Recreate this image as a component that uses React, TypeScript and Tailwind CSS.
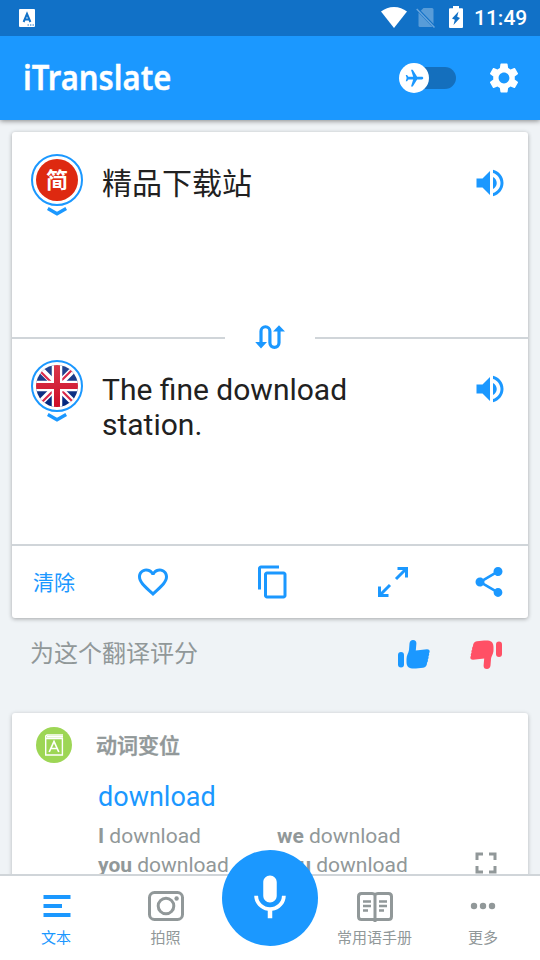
import type { ReactNode } from 'react';
import {
  MdContentCopy,
  MdFavoriteBorder,
  MdFlight,
  MdFullscreen,
  MdMic,
  MdSettings,
  MdShare,
} from 'react-icons/md';

function StatusBar() {
  return (
    <div className="flex h-9 items-center bg-[#1171c7] pr-3 pl-[19px] text-white">
      <svg className="h-[18px] w-4" viewBox="0 0 16 18">
        <rect width="16" height="18" rx="1" fill="#fff" />
        <path d="M4.600 13L8 4.800L11.400 13M5.600 10.400H10.400" fill="none" stroke="#1171c7" strokeWidth="2" />
        <path d="M8.500 16h1.400M11 16h1.400M13.500 16h1.400" stroke="#1171c7" strokeWidth="1.200" />
      </svg>
      <svg className="mt-[-2px] ml-auto h-[21px] w-[26px]" viewBox="0 0 26 21">
        <path d="M0 4.600C3.600 1.700 8 0 13 0s9.400 1.700 13 4.600L13 21z" fill="#fff" />
      </svg>
      <svg className="ml-[9px] h-[22px] w-5" viewBox="0 0 20 22">
        <path d="M7.500 1H16q1.500 0 1.500 1.500V20H4q-1.500 0-1.500-1.500V6z" fill="#fff" opacity=".3" />
        <path d="M.7 1.500L19 20.500" stroke="#1171c7" strokeWidth="3" />
        <path d="M.7 2L18.500 20.500" stroke="#68a5dd" strokeWidth="1.500" />
      </svg>
      <svg className="mt-[-2px] ml-[13px] h-[22px] w-[14px]" viewBox="0 0 14 22">
        <path d="M4 0h6v2.200h3q1 0 1 1V21q0 1-1 1H1q-1 0-1-1V3.200q0-1 1-1h3z" fill="#fff" />
        <path d="M9.500 5.500L3 12.500l2.800 1.200L4.500 19L11 12l-2.800-1.200z" fill="#1171c7" />
      </svg>
      <span className="ml-[11px] w-[54px] text-[21px] leading-9 font-medium">11:49</span>
    </div>
  );
}

function Header() {
  return (
    <header className="relative z-10 shadow-[0_1px_5px_rgba(0,0,0,0.45)]">
      <StatusBar />
      <div className="flex h-[84px] items-center bg-[#1b98ff] pr-[18px] pl-[23px] text-white">
        <h1 className="mt-[-3px] w-[149px] origin-left scale-x-[0.885] font-['Noto_Sans'] text-[35px] leading-[84px] font-semibold [-webkit-text-stroke:0.4px_white]">
          iTranslate
        </h1>
        <div className="ml-auto flex h-[22px] w-[57px] items-center rounded-full bg-linear-to-r from-transparent from-30% to-[#146fbd] to-30%">
          <span className="flex size-[30px] shrink-0 items-center justify-center rounded-full bg-white">
            <MdFlight className="size-[21px] rotate-90 text-[#1b98ff]" />
          </span>
        </div>
        <MdSettings className="ml-[30px] size-9" />
      </div>
    </header>
  );
}

function Speaker() {
  return (
    <svg className="size-9" viewBox="0 0 24 24" fill="#1b98ff">
      <path d="M3 9v6h4l5 5V4L7 9H3zm13.500 3c0-1.770-1.020-3.290-2.500-4.030v8.050c1.480-.73 2.500-2.250 2.500-4.020zM14 3.230v2.060c2.890.86 5 3.540 5 6.710s-2.110 5.850-5 6.710v2.060c4.010-.91 7-4.490 7-8.770s-2.990-7.860-7-8.770z" />
    </svg>
  );
}

function LanguageBadge({ children }: { children: ReactNode }) {
  return (
    <div className="flex w-[52px] flex-col items-center">
      <div className="flex size-[52px] items-center justify-center rounded-full border-[2px] border-[#1b98ff]">
        {children}
      </div>
      <svg className="mt-[1px] h-[10px] w-5" viewBox="0 0 20 10" fill="none" stroke="#1b98ff" strokeWidth="3.400">
        <path d="M.8 1.500L10 6.700L19.200 1.500" />
      </svg>
    </div>
  );
}

function UnionJack() {
  return (
    <svg className="size-[42px]" viewBox="0 0 42 42">
      <defs>
        <clipPath id="round">
          <circle cx="21" cy="21" r="21" />
        </clipPath>
        <linearGradient id="navy" x1="0" y1="0" x2="0" y2="1">
          <stop offset="0" stopColor="#27468f" />
          <stop offset="1" stopColor="#00257e" />
        </linearGradient>
        <linearGradient id="crimson" x1="0" y1="0" x2="0" y2="1">
          <stop offset="0" stopColor="#d9384c" />
          <stop offset="1" stopColor="#ce0d28" />
        </linearGradient>
      </defs>
      <g clipPath="url(#round)">
        <rect width="42" height="42" fill="url(#navy)" />
        <path d="M2 2L40 40M40 2L2 40" stroke="#fff" strokeWidth="6.500" />
        <path d="M4 6L21 23M38 38L21 21M36 5L21 20M6 37L21 22" stroke="#d9294a" strokeWidth="2.200" />
        <path d="M21 0V42M0 21H42" stroke="#fff" strokeWidth="10.500" />
        <path d="M18 0h6v18h18v6H24v18h-6V24H0v-6h18z" fill="url(#crimson)" />
      </g>
    </svg>
  );
}

function TranslationCard() {
  return (
    <section className="rounded-[3px] bg-white shadow-[0_1px_4px_rgba(0,0,0,0.32)]">
      <div className="flex h-[200px] items-start pt-[22px] pr-5 pl-[19px]">
        <LanguageBadge>
          <span className="flex size-[42px] items-center justify-center rounded-full bg-[#de2910] pt-[2px] text-[22px] leading-none font-bold text-white">
            简
          </span>
        </LanguageBadge>
        <p className="ml-[19px] flex-1 pt-[12px] text-[30px] leading-[35px]">精品下载站</p>
        <span className="pt-[11px]">
          <Speaker />
        </span>
      </div>

      <div className="flex h-[12px] items-center">
        <div className="h-[2px] flex-1 bg-[#d0d5d9]" />
        <div className="flex w-[90px] justify-center">
          <svg className="mt-[-2px] h-6 w-[30px] shrink-0" viewBox="0 0 30 24">
            <path d="M6 18V6.200a4.400 4.400 0 0 1 8.900 0v11.600a4.500 4.500 0 0 0 9.100 0V6" fill="none" stroke="#1b98ff" strokeWidth="3.200" />
            <path d="M.2 17h11.800L6 23.500zM18 6.500h12L24 .3z" fill="#1b98ff" />
          </svg>
        </div>
        <div className="h-[2px] flex-1 bg-[#d0d5d9]" />
      </div>

      <div className="flex h-[200px] items-start pt-4 pr-5 pl-[19px]">
        <LanguageBadge>
          <UnionJack />
        </LanguageBadge>
        <p className="ml-[19px] w-[290px] pt-[12px] text-[30px] leading-[35px]">The fine download station.</p>
        <span className="ml-auto pt-[11px]">
          <Speaker />
        </span>
      </div>

      <div className="flex h-[74px] items-center border-t-2 border-[#d0d5d9] pr-[21px] pl-[21px] text-[#1b98ff]">
        <span className="w-[42px] pt-[3px] text-[21px]">清除</span>
        <MdFavoriteBorder className="ml-[60px] size-9" />
        <MdContentCopy className="ml-[84px] size-9" />
        <svg className="ml-[87px] h-[30px] w-[30px]" viewBox="0 0 30 30" fill="none" stroke="currentColor" strokeWidth="3">
          <path d="M19.500 1.500H28.500V10.500M28 2L18 12M10.500 28.500H1.500V19.500M2 28L12 18" />
        </svg>
        <MdShare className="ml-auto size-9" />
      </div>
    </section>
  );
}

function Thumb() {
  return (
    <svg className="h-[29px] w-8" viewBox="0 0 32 29" fill="currentColor">
      <rect x="0" y="12" width="6" height="15.500" rx="3" />
      <path d="M8.500 19C8.500 15 10.500 13.500 11 10L11.500 3.500C11.800 1.200 13 0 15 0c2.300 0 3.500 1.400 3.400 3.600L17.800 10.500L29 9.200c2 0 3 1.300 2.600 2.800-.2.900-.7 1.300-.7 1.300.5.900.4 2-.5 3 .4 1.200.2 2.200-.6 3.100.3 1.300 0 2.200-.7 3-.2 3.300-1.500 5-4 5.300-4 .5-8 .9-11 .7C10 28.100 8.500 25.500 8.500 22z" />
    </svg>
  );
}

function RatingRow() {
  return (
    <div className="flex h-[95px] items-start pt-[18px] pr-[26px] pl-[18px]">
      <span className="text-[24px] leading-9 text-[#919899]">为这个翻译评分</span>
      <span className="mt-[4px] ml-auto text-[#1b98ff]">
        <Thumb />
      </span>
      <span className="mt-[4px] ml-10 rotate-180 text-[#ff5065]">
        <Thumb />
      </span>
    </div>
  );
}

const conjugations = [
  ['I', 'we'],
  ['you', 'you'],
];

function ConjugationCard() {
  return (
    <section className="h-[200px] rounded-[3px] bg-white pt-[14px] text-[#919899] shadow-[0_1px_4px_rgba(0,0,0,0.25)]">
      <div className="flex h-9 items-center pl-6">
        <svg className="size-9" viewBox="0 0 36 36" fill="none" stroke="#fff">
          <circle cx="18" cy="18" r="18" fill="#9dd655" stroke="none" />
          <path d="M9.700 8.500V28H26.400V11.500H11q-1.300 0-1.300-1.500T11 8H27M11 9.800H27" strokeWidth="1.400" />
          <path d="M13.200 25L18 14.500L22.800 25M15 21.500H21" strokeWidth="1.700" />
        </svg>
        <h2 className="ml-6 pt-[3px] text-[21px] font-medium [-webkit-text-stroke:0.5px_#919899]">动词变位</h2>
      </div>
      <div className="flex pr-6 pl-[86px]">
        <div className="flex-1">
          <p className="mt-[14px] text-[27px] leading-10 text-[#1b98ff]">download</p>
          <div className="mt-[5px] grid grid-cols-[179px_1fr] text-[21px] leading-[29px]">
            {conjugations.flat().map((pronoun, i) => (
              <span key={i}>
                <b>{pronoun}</b> download
              </span>
            ))}
          </div>
        </div>
        <MdFullscreen className="mt-[82px] size-9" />
      </div>
    </section>
  );
}

interface TabProps {
  label: string;
  active?: boolean;
  children: ReactNode;
}

function Tab({ label, active, children }: TabProps) {
  return (
    <div className={`flex flex-col items-center pt-[12px] ${active ? 'text-[#1b98ff]' : 'text-[#919899]'}`}>
      <svg className="size-9" viewBox="0 0 36 36" fill="none" stroke="currentColor" strokeWidth="3">
        {children}
      </svg>
      <span className="mt-[4px] text-[15px] leading-5">{label}</span>
    </div>
  );
}

function BottomNav() {
  return (
    <nav className="relative z-10 grid h-[86px] grid-cols-[112px_107px_102px_107px_110px] border-t-2 border-[#d0d5d9] bg-white">
      <Tab label="文本" active>
        <path d="M5.500 9H32.500M5.500 18H24M5.500 27H32.500" strokeWidth="4.200" />
      </Tab>
      <Tab label="拍照">
        <rect x="1.500" y="4.500" width="33" height="27" rx="5" />
        <circle cx="18" cy="18" r="7.800" />
        <circle cx="28.600" cy="10.500" r="2.200" fill="currentColor" stroke="none" />
      </Tab>
      <div />
      <Tab label="常用语手册">
        <path d="M18 7Q17 5.500 15 5.500H4.500Q1.500 5.500 1.500 8.500V28.500Q1.500 31.500 4.500 31.500H31.500Q34.500 31.500 34.500 28.500V8.500Q34.500 5.500 31.500 5.500H21Q19 5.500 18 7V34" />
        <path d="M6 13.500H14M6 18H14M6 22.500H11M22 13.500H30M22 18H30M22 22.500H27" strokeWidth="2.500" />
      </Tab>
      <Tab label="更多">
        <g fill="currentColor" stroke="none">
          <circle cx="9" cy="18" r="3.200" />
          <circle cx="18" cy="18" r="3.200" />
          <circle cx="27" cy="18" r="3.200" />
        </g>
      </Tab>
      <button className="absolute top-[-26px] left-[222px] flex size-24 items-center justify-center rounded-full bg-[#1b98ff] text-white">
        <MdMic className="size-[54px]" />
      </button>
    </nav>
  );
}

export default function App() {
  return (
    <div className="flex h-[960px] w-[540px] flex-col overflow-hidden bg-[#eff3f6] font-[Roboto,'Noto_Sans_CJK_SC',sans-serif] text-[#212121]">
      <Header />
      <main className="min-h-0 flex-1 overflow-hidden px-3 pt-3">
        <TranslationCard />
        <RatingRow />
        <ConjugationCard />
      </main>
      <BottomNav />
    </div>
  );
}
